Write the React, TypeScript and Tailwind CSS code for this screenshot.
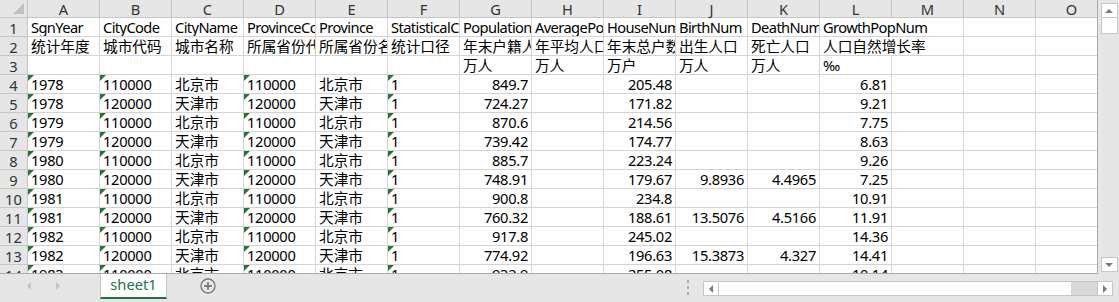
import React from "react";

type Cell = { v: string; r?: boolean; t?: boolean; ov?: boolean; h?: boolean } | null;

const COLS = ["A", "B", "C", "D", "E", "F", "G", "H", "I", "J", "K", "L", "M", "N", "O"];

const txt = (v: string): Cell => ({ v });
const hd = (v: string): Cell => ({ v, h: true });
const tri = (v: string): Cell => ({ v, t: true });
const num = (v: string): Cell => (v ? { v, r: true } : null);

const head1: Cell[] = [
  hd("SgnYear"), hd("CityCode"), hd("CityName"), hd("ProvinceCode"), hd("Province"),
  hd("StatisticalCaliber"), hd("PopulationNum"), hd("AveragePopNum"), hd("HouseNumber"),
  hd("BirthNum"), hd("DeathNum"), { v: "GrowthPopNum", ov: true, h: true }, null, null, null,
];
const head2: Cell[] = [
  txt("统计年度"), txt("城市代码"), txt("城市名称"), txt("所属省份代码"), txt("所属省份名称"),
  txt("统计口径"), txt("年末户籍人口"), txt("年平均人口"), txt("年末总户数"),
  txt("出生人口"), txt("死亡人口"), { v: "人口自然增长率", ov: true }, null, null, null,
];
const head3: Cell[] = [
  null, null, null, null, null, null, txt("万人"), txt("万人"), txt("万户"), txt("万人"), txt("万人"), txt("‰"), null, null, null,
];

const raw: [string, string, string, string, string, string, string, string][] = [
  ["1978", "110000", "北京市", "849.7", "205.48", "", "", "6.81"],
  ["1978", "120000", "天津市", "724.27", "171.82", "", "", "9.21"],
  ["1979", "110000", "北京市", "870.6", "214.56", "", "", "7.75"],
  ["1979", "120000", "天津市", "739.42", "174.77", "", "", "8.63"],
  ["1980", "110000", "北京市", "885.7", "223.24", "", "", "9.26"],
  ["1980", "120000", "天津市", "748.91", "179.67", "9.8936", "4.4965", "7.25"],
  ["1981", "110000", "北京市", "900.8", "234.8", "", "", "10.91"],
  ["1981", "120000", "天津市", "760.32", "188.61", "13.5076", "4.5166", "11.91"],
  ["1982", "110000", "北京市", "917.8", "245.02", "", "", "14.36"],
  ["1982", "120000", "天津市", "774.92", "196.63", "15.3873", "4.327", "14.41"],
  ["1983", "110000", "北京市", "932.9", "255.08", "", "", "10.14"],
];

const dataRows: Cell[][] = raw.map((d) => [
  tri(d[0]), tri(d[1]), txt(d[2]), tri(d[1]), txt(d[2]), tri("1"),
  num(d[3]), null, num(d[4]), num(d[5]), num(d[6]), num(d[7]), null, null, null,
]);

const allRows: Cell[][] = [head1, head2, head3, ...dataRows];

const isCjk = (s: string) => /[\u4e00-\u9fff]/.test(s);

function GridCell({ c }: { c: Cell }) {
  if (!c) return <div className="h-[19px] border-r border-b border-[#d4d4d4]" />;
  const track = c.h ? "tracking-[-0.6px]" : isCjk(c.v) ? "" : "tracking-[-0.3px]";
  return (
    <div
      className={
        "relative h-[19px] border-b border-[#d4d4d4] flex items-center whitespace-nowrap px-[3px] " +
        (c.ov ? "overflow-visible z-10 border-r border-r-transparent " : "overflow-hidden border-r ") +
        (c.r ? "justify-end" : "justify-start")
      }
    >
      {c.t && (
        <svg className="absolute left-0 top-0" width="6" height="6" viewBox="0 0 6 6">
          <polygon points="0,0 6,0 0,6" fill="#1f7a3a" />
        </svg>
      )}
      <span className={"leading-[19px] pt-[1px] " + track}>{c.v}</span>
    </div>
  );
}

function Arrow({ dir }: { dir: "up" | "down" | "left" | "right" }) {
  const pts: Record<string, string> = {
    up: "1,6 5,2 9,6",
    down: "1,2 5,6 9,2",
    left: "6,1 2,5 6,9",
    right: "2,1 6,5 2,9",
  };
  const vert = dir === "up" || dir === "down";
  return (
    <svg width={vert ? 10 : 8} height={vert ? 8 : 10} viewBox={vert ? "0 0 10 8" : "0 0 8 10"}>
      <polygon points={pts[dir]} fill="#7a7a7a" />
    </svg>
  );
}

export default function App() {
  return (
    <div
      className="w-[1119px] h-[302px] overflow-hidden bg-[#e6e6e6] text-[14.67px] text-black flex flex-col"
      style={{ fontFamily: '"Noto Sans", "Noto Sans CJK SC", sans-serif' }}
    >
      <div className="flex h-[274px]">
        {/* grid */}
        <div className="w-[1098px] h-[274px] overflow-hidden bg-white border-r border-b border-[#ababab]">
          <div className="grid grid-cols-[28px_repeat(15,72px)] w-[1108px]">
            <div className="h-[18px] bg-[#e6e6e6] border-r border-b border-[#c6c6c6] relative">
              <svg className="absolute right-[3px] bottom-[3px]" width="11" height="11" viewBox="0 0 11 11">
                <polygon points="11,0 11,11 0,11" fill="#c0c0c0" />
              </svg>
            </div>
            {COLS.map((l) => (
              <div
                key={l}
                className="h-[18px] bg-[#e6e6e6] border-r border-b border-[#c6c6c6] flex items-center justify-center text-[#333] leading-[18px] pt-[1px]"
              >
                {l}
              </div>
            ))}
            {allRows.map((row, ri) => (
              <React.Fragment key={ri}>
                <div className="h-[19px] bg-[#e6e6e6] border-r border-b border-[#c6c6c6] flex items-center justify-center text-[#333] pt-[1px]">
                  {ri + 1}
                </div>
                {row.map((c, ci) => (
                  <GridCell key={ci} c={c} />
                ))}
              </React.Fragment>
            ))}
          </div>
        </div>
        {/* vertical scrollbar */}
        <div className="w-[21px] h-[274px] flex flex-col items-center pt-[3px] pb-[2px] pl-[1px]">
          <div className="w-[17px] h-[15px] bg-white border border-[#c6c6c6] flex items-center justify-center">
            <Arrow dir="up" />
          </div>
          <div className="w-[17px] h-[16px] bg-white border border-[#c6c6c6] border-t-0" />
          <div className="flex-1" />
          <div className="w-[17px] h-[15px] bg-white border border-[#c6c6c6] flex items-center justify-center">
            <Arrow dir="down" />
          </div>
        </div>
      </div>
      {/* bottom bar */}
      <div className="flex h-[28px] items-start">
        <div className="w-[100px] h-[24px] flex items-center pl-[25px] gap-[21px]">
          <svg width="8" height="10" viewBox="0 0 8 10"><polygon points="6,1 2,5 6,9" fill="#c4c4c4" /></svg>
          <svg width="8" height="10" viewBox="0 0 8 10"><polygon points="2,1 6,5 2,9" fill="#c4c4c4" /></svg>
        </div>
        <div className="w-[67px] h-[25px] bg-white border-l border-r border-[#c6c6c6] border-b-[2px] border-b-[#217346] flex items-center justify-center text-[#217346] leading-none pb-[2px]">
          sheet1
        </div>
        <div className="w-[82px] h-[24px] flex items-center pl-[33px]">
          <svg width="16" height="16" viewBox="0 0 16 16">
            <circle cx="8" cy="8" r="7" fill="none" stroke="#7a7a7a" strokeWidth="1.4" />
            <path d="M8 4.2v7.6M4.2 8h7.6" stroke="#7a7a7a" strokeWidth="1.8" />
          </svg>
        </div>
        <div className="w-[437px]" />
        <div className="w-[3px] h-[24px] flex flex-col items-center justify-center gap-[3px] pt-[2px]">
          <div className="w-[2px] h-[3px] bg-[#b0b0b0]" />
          <div className="w-[2px] h-[3px] bg-[#b0b0b0]" />
          <div className="w-[2px] h-[3px] bg-[#b0b0b0]" />
        </div>
        <div className="w-[14px]" />
        <div className="mt-[7px] flex h-[15px] w-[410px] bg-[#d9d9d9] border border-[#c6c6c6]">
          <div className="w-[15px] h-full bg-white border-r border-[#c6c6c6] flex items-center justify-center">
            <Arrow dir="left" />
          </div>
          <div className="w-[352px] h-full bg-white" />
          <div className="flex-1" />
          <div className="w-[15px] h-full bg-white border-l border-[#c6c6c6] flex items-center justify-center">
            <Arrow dir="right" />
          </div>
        </div>
      </div>
    </div>
  );
}
